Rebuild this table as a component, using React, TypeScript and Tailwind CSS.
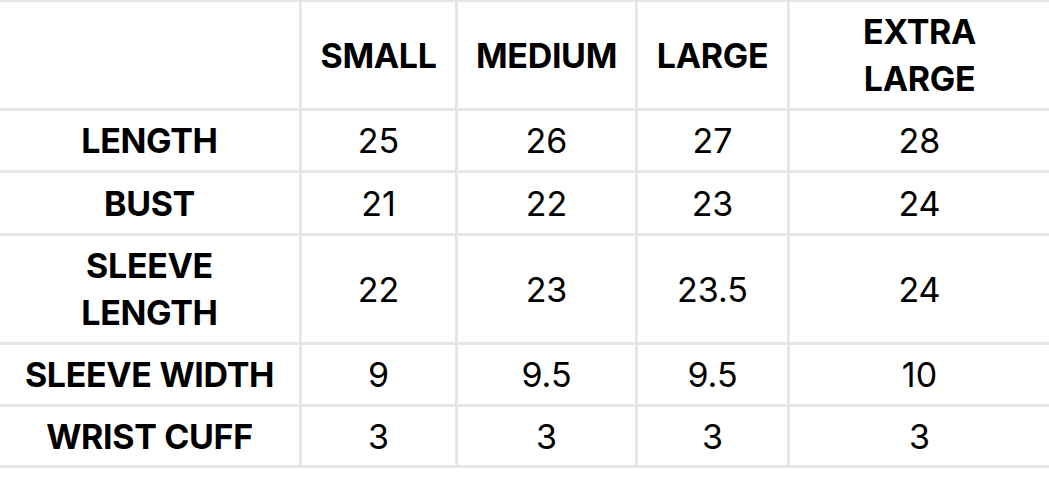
import React from 'react';

const sizes = ["SMALL", "MEDIUM", "LARGE", "EXTRA LARGE"];

const rows: { label: string; values: string[] }[] = [
  { label: "LENGTH", values: ["25", "26", "27", "28"] },
  { label: "BUST", values: ["21", "22", "23", "24"] },
  { label: "SLEEVE LENGTH", values: ["22", "23", "23.5", "24"] },
  { label: "SLEEVE WIDTH", values: ["9", "9.5", "9.5", "10"] },
  { label: "WRIST CUFF", values: ["3", "3", "3", "3"] },
];

const headCell = "bg-white flex items-center justify-center text-center font-bold text-[34px] leading-[47px] tracking-[-0.01em] text-black";
const numCell = "bg-white flex items-center justify-center text-[34px] leading-[47px] text-black";

export default function App() {
  return (
    <div className="w-[1049px] h-[495px] bg-white" style={{ fontFamily: "Inter, 'Noto Sans', sans-serif" }}>
      <div className="bg-[#e6e6e8] pt-[2px] pb-[3px] grid grid-cols-[299px_153px_177px_149px_1fr] grid-rows-[106px_59px_60px_106px_59px_58px] gap-[3px]">
        <div className="bg-white" />
        {sizes.map((s) => (
          <div key={s} className={headCell}>
            {s === "EXTRA LARGE" ? (
              <span>EXTRA<br />LARGE</span>
            ) : (
              s
            )}
          </div>
        ))}
        {rows.map((r) => (
          <React.Fragment key={r.label}>
            <div className={headCell}>
              {r.label === "SLEEVE LENGTH" ? (
                <span>SLEEVE<br />LENGTH</span>
              ) : (
                r.label
              )}
            </div>
            {r.values.map((v, i) => (
              <div key={i} className={numCell}>{v}</div>
            ))}
          </React.Fragment>
        ))}
      </div>
    </div>
  );
}
